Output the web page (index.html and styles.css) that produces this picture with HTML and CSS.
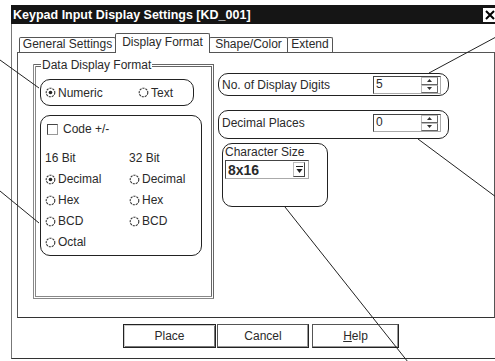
FILE: index.html
```html
<!DOCTYPE html>
<html lang="en">
<head>
  <meta charset="UTF-8">
  <meta name="viewport" content="width=device-width, initial-scale=1.0">
  <title>Keypad Input Display Settings [KD_001]</title>
  <link rel="stylesheet" href="styles.css">
</head>
<body>
  <div class="dialog">
    <div class="titlebar">
      <span class="title">Keypad Input Display Settings [KD_001]</span>
      <span class="close"><svg width="10" height="10" viewBox="0 0 10 10"><path d="M1 1 L9 9 M9 1 L1 9" stroke="#000" stroke-width="2"/></svg></span>
    </div>
    <div class="frame">
      <div class="tabs">
        <div class="tab tab-general">General Settings</div>
        <div class="tab tab-format active">Display Format</div>
        <div class="tab tab-shape">Shape/Color</div>
        <div class="tab tab-extend">Extend</div>
      </div>
      <div class="panel">
        <fieldset class="group">
          <legend>Data Display Format</legend>
          <div class="callout type-box">
            <span class="radio wide"><svg class="dot" width="11" height="11" viewBox="0 0 11 11"><circle cx="5.5" cy="5.5" r="4.3" fill="#fff" stroke="#333" stroke-width="1.1" stroke-dasharray="2.2 0.9"/><circle cx="5.5" cy="5.5" r="1.8" fill="#222"/></svg>Numeric</span>
            <span class="radio"><svg class="dot" width="11" height="11" viewBox="0 0 11 11"><circle cx="5.5" cy="5.5" r="4.3" fill="#fff" stroke="#333" stroke-width="1.1" stroke-dasharray="2.2 0.9"/></svg>Text</span>
          </div>
          <div class="callout code-box">
            <div class="check"><span class="box"></span>Code +/-</div>
            <div class="bits">
              <div class="bit-col">
                <div class="row">16 Bit</div>
                <div class="row radio"><svg class="dot" width="11" height="11" viewBox="0 0 11 11"><circle cx="5.5" cy="5.5" r="4.3" fill="#fff" stroke="#333" stroke-width="1.1" stroke-dasharray="2.2 0.9"/><circle cx="5.5" cy="5.5" r="1.8" fill="#222"/></svg>Decimal</div>
                <div class="row radio"><svg class="dot" width="11" height="11" viewBox="0 0 11 11"><circle cx="5.5" cy="5.5" r="4.3" fill="#fff" stroke="#333" stroke-width="1.1" stroke-dasharray="2.2 0.9"/></svg>Hex</div>
                <div class="row radio"><svg class="dot" width="11" height="11" viewBox="0 0 11 11"><circle cx="5.5" cy="5.5" r="4.3" fill="#fff" stroke="#333" stroke-width="1.1" stroke-dasharray="2.2 0.9"/></svg>BCD</div>
                <div class="row radio"><svg class="dot" width="11" height="11" viewBox="0 0 11 11"><circle cx="5.5" cy="5.5" r="4.3" fill="#fff" stroke="#333" stroke-width="1.1" stroke-dasharray="2.2 0.9"/></svg>Octal</div>
              </div>
              <div class="bit-col">
                <div class="row">32 Bit</div>
                <div class="row radio"><svg class="dot" width="11" height="11" viewBox="0 0 11 11"><circle cx="5.5" cy="5.5" r="4.3" fill="#fff" stroke="#333" stroke-width="1.1" stroke-dasharray="2.2 0.9"/></svg>Decimal</div>
                <div class="row radio"><svg class="dot" width="11" height="11" viewBox="0 0 11 11"><circle cx="5.5" cy="5.5" r="4.3" fill="#fff" stroke="#333" stroke-width="1.1" stroke-dasharray="2.2 0.9"/></svg>Hex</div>
                <div class="row radio"><svg class="dot" width="11" height="11" viewBox="0 0 11 11"><circle cx="5.5" cy="5.5" r="4.3" fill="#fff" stroke="#333" stroke-width="1.1" stroke-dasharray="2.2 0.9"/></svg>BCD</div>
              </div>
            </div>
          </div>
        </fieldset>

        <div class="side">
          <div class="callout field-box digits">
            <span class="field-label">No. of Display Digits</span>
            <div class="spin">
              <span class="spin-value">5</span>
              <span class="spin-btns">
                <span class="spin-btn"><svg width="5" height="3" viewBox="0 0 5 3"><path d="M0 3 L2.5 0 L5 3 Z" fill="#333"/></svg></span>
                <span class="spin-btn"><svg width="5" height="3" viewBox="0 0 5 3"><path d="M0 0 L2.5 3 L5 0 Z" fill="#333"/></svg></span>
              </span>
            </div>
          </div>
          <div class="callout field-box decimals">
            <span class="field-label">Decimal Places</span>
            <div class="spin">
              <span class="spin-value">0</span>
              <span class="spin-btns">
                <span class="spin-btn"><svg width="5" height="3" viewBox="0 0 5 3"><path d="M0 3 L2.5 0 L5 3 Z" fill="#333"/></svg></span>
                <span class="spin-btn"><svg width="5" height="3" viewBox="0 0 5 3"><path d="M0 0 L2.5 3 L5 0 Z" fill="#333"/></svg></span>
              </span>
            </div>
          </div>
          <div class="callout char-box">
            <div class="char-label">Character Size</div>
            <div class="combo">
              <span class="combo-value">8x16</span>
              <span class="combo-btn"><svg width="7" height="8" viewBox="0 0 7 8"><path d="M0 0.5 H7" stroke="#222"/><path d="M0.5 3 L3.5 7 L6.5 3 Z" fill="#222"/></svg></span>
            </div>
          </div>
        </div>
      </div>

      <div class="buttons">
        <button class="btn btn-place">Place</button>
        <button class="btn btn-cancel">Cancel</button>
        <button class="btn btn-help"><u>H</u>elp</button>
      </div>
    </div>
  </div>

  <svg class="leaders" width="495" height="361" viewBox="0 0 495 361">
    <path d="M0 60 L39 88" />
    <path d="M0 191 L39 223" />
    <path d="M496 37 L429 73" />
    <path d="M418 139 L496 197" />
    <path d="M285 207 L408 362" />
  </svg>
</body>
</html>
```

FILE: styles.css
```css
* { box-sizing: border-box; }
body { margin: 0; width: 495px; height: 361px; overflow: hidden; position: relative; background: #fff; color: #2a2a2a; font-family: "Liberation Sans", Arial, sans-serif; font-size: 12px; }

.dialog { margin: 5px 0 0 11px; width: 492px; }
.titlebar { height: 19px; background: #151515; color: #fff; display: flex; align-items: center; justify-content: space-between; padding-left: 2px; }
.title { font-weight: bold; font-size: 12.5px; }
.close { width: 14px; height: 14px; margin-right: 6px; background: #fff; display: flex; align-items: center; justify-content: center; }

.frame { border-left: 1px solid #777; border-bottom: 1px solid #333; padding: 9px 0 10px 5px; }

.tabs { display: flex; align-items: flex-end; height: 19px; margin-left: 2px; }
.tab { height: 15px; line-height: 13px; text-align: center; border: 1px solid #555; border-bottom: none; border-radius: 2px 2px 0 0; background: #fff; }
.tab + .tab { margin-left: -1px; }
.tab-general { width: 97px; }
.tab-format { width: 95px; }
.tab-shape { width: 79px; }
.tab-extend { width: 46px; }
.tab.active { height: 20px; margin-bottom: -1px; padding-top: 2px; position: relative; z-index: 1; }

.panel { width: 478px; height: 266px; border: 1px solid #555; border-bottom-color: #333; padding: 5px 0 0 15px; display: grid; grid-template-columns: 181px auto; column-gap: 4px; align-items: start; }

.group { margin: 0; height: 241px; padding: 7px 4px 0; border: 3px double #666; border-left-color: #888; border-bottom-color: #888; }
.group legend { padding: 0 1px; margin-left: 1px; line-height: 14px; }

.callout { border: 1px solid #222; border-radius: 10px; }
.type-box { width: 154px; height: 27px; display: flex; align-items: center; padding-left: 4px; }
.radio { display: flex; align-items: center; gap: 2px; }
.radio.wide { width: 93px; }
.dot { flex: none; }

.code-box { margin-top: 9px; width: 162px; height: 141px; padding: 7px 0 0 4px; }
.check { display: flex; align-items: center; gap: 5px; height: 12px; padding-left: 2px; }
.check .box { width: 11px; height: 11px; border: 1px solid #444; border-right-color: #999; border-bottom-color: #999; }
.bits { display: grid; grid-template-columns: 84px auto; margin-top: 13px; }
.row { height: 21px; line-height: 21px; }

.side { padding-top: 15px; }
.field-box { width: 231px; display: flex; align-items: center; padding-left: 3px; }
.field-label { flex: 1; }
.digits { height: 23px; }
.decimals { height: 29px; margin-top: 14px; padding-bottom: 4px; }
.spin { width: 68px; height: 18px; margin-right: 7px; display: flex; border: 1px solid #444; border-right-color: #aaa; border-bottom-color: #aaa; }
.spin-value { flex: 1; padding-left: 2px; line-height: 15px; }
.spin-btns { width: 17px; display: flex; flex-direction: column; margin-right: 2px; }
.spin-btn { flex: 1; display: flex; align-items: center; justify-content: center; border: 1px solid #666; border-top-color: #bbb; border-left-color: #bbb; }

.char-box { width: 106px; height: 64px; margin: 4px 0 0 4px; padding-left: 2px; border-radius: 10px; }
.char-label { line-height: 14px; margin-top: 1px; }
.combo { width: 84px; height: 19px; margin-top: 1px; display: flex; align-items: center; border: 1px solid #444; border-right-color: #aaa; border-bottom-color: #aaa; }
.combo-value { flex: 1; padding-left: 2px; font-weight: bold; font-size: 14px; }
.combo-btn { width: 12px; height: 15px; margin-right: 3px; display: flex; align-items: center; justify-content: center; border: 1px solid #444; border-top-color: #bbb; border-left-color: #bbb; }

.buttons { display: flex; margin-top: 6px; padding-left: 106px; }
.btn { height: 24px; padding: 0; background: #fff; color: #2a2a2a; font-family: inherit; font-size: 12px; border: 1px solid #555; border-right-color: #222; border-bottom-color: #222; box-shadow: inset -1px -1px 0 #999; }
.btn-place { width: 93px; border-color: #222; box-shadow: inset 1px 1px 0 #ccc, inset -1px -1px 0 #777; }
.btn-cancel { width: 92px; margin-left: 1px; }
.btn-help { width: 87px; margin-left: 3px; }

.leaders { position: absolute; top: 0; left: 0; pointer-events: none; }
.leaders path { stroke: #222; stroke-width: 1; fill: none; }
```
